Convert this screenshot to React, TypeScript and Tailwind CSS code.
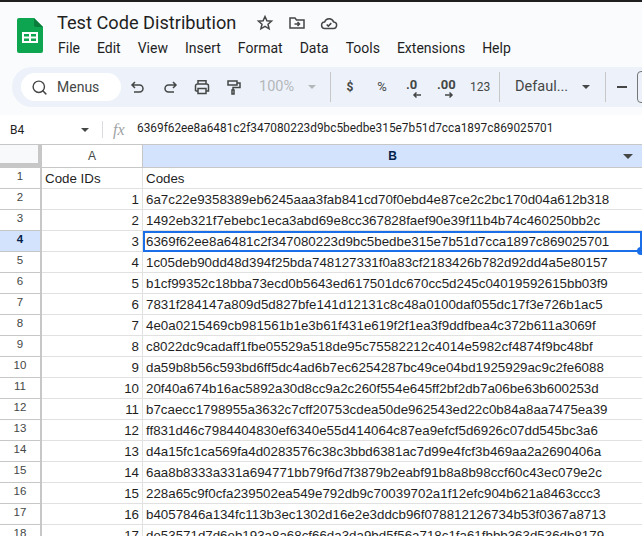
import { Search } from "lucide-react";

const rows = [
  "6a7c22e9358389eb6245aaa3fab841cd70f0ebd4e87ce2c2bc170d04a612b318",
  "1492eb321f7ebebc1eca3abd69e8cc367828faef90e39f11b4b74c460250bb2c",
  "6369f62ee8a6481c2f347080223d9bc5bedbe315e7b51d7cca1897c869025701",
  "1c05deb90dd48d394f25bda748127331f0a83cf2183426b782d92dd4a5e80157",
  "b1cf99352c18bba73ecd0b5643ed617501dc670cc5d245c04019592615bb03f9",
  "7831f284147a809d5d827bfe141d12131c8c48a0100daf055dc17f3e726b1ac5",
  "4e0a0215469cb981561b1e3b61f431e619f2f1ea3f9ddfbea4c372b611a3069f",
  "c8022dc9cadaff1fbe05529a518de95c75582212c4014e5982cf4874f9bc48bf",
  "da59b8b56c593bd6ff5dc4ad6b7ec6254287bc49ce04bd1925929ac9c2fe6088",
  "20f40a674b16ac5892a30d8cc9a2c260f554e645ff2bf2db7a06be63b600253d",
  "b7caecc1798955a3632c7cff20753cdea50de962543ed22c0b84a8aa7475ea39",
  "ff831d46c7984404830ef6340e55d414064c87ea9efcf5d6926c07dd545bc3a6",
  "d4a15fc1ca569fa4d0283576c38c3bbd6381ac7d99e4fcf3b469aa2a2690406a",
  "6aa8b8333a331a694771bb79f6d7f3879b2eabf91b8a8b98ccf60c43ec079e2c",
  "228a65c9f0cfa239502ea549e792db9c70039702a1f12efc904b621a8463ccc3",
  "b4057846a134fc113b3ec1302d16e2e3ddcb96f078812126734b53f0367a8713",
  "de53571d7d6eb193a8a68cf66da3da9bd5f56a718c1fa61fbbb363d536db8179",
];

const menus = ["File", "Edit", "View", "Insert", "Format", "Data", "Tools", "Extensions", "Help"];

function SheetsLogo() {
  return (
    <svg width="26" height="35" viewBox="0 0 26 35" className="shrink-0">
      <path d="M2 0h15l9 9v24a2 2 0 0 1-2 2H2a2 2 0 0 1-2-2V2a2 2 0 0 1 2-2z" fill="#0da54f" />
      <path d="M17 0l9 9h-7a2 2 0 0 1-2-2z" fill="#0a7d3c" />
      <path d="M5 14h16v11H5z" fill="#fff" />
      <path d="M7 16h5v2.500H7zM14 16h5v2.500h-5zM7 20.500h5V23H7zM14 20.500h5V23h-5z" fill="#0da54f" />
    </svg>
  );
}

function Icon({ children, className = "" }: { children: React.ReactNode; className?: string }) {
  return (
    <svg
      width="18"
      height="18"
      viewBox="0 0 18 18"
      fill="none"
      stroke="#444746"
      strokeWidth="1.500"
      className={`shrink-0 ${className}`}
    >
      {children}
    </svg>
  );
}

function Divider() {
  return <div className="mx-[9px] h-[30px] w-px shrink-0 bg-[#c7c7c7]" />;
}

function Header() {
  return (
    <div className="flex h-[65px] items-start pl-[17px]">
      <div className="mt-[16px]">
        <SheetsLogo />
      </div>
      <div className="ml-[14px] flex flex-col">
        <div className="mt-[8px] flex h-[26px] items-center">
          <span className="text-[18.200px] leading-[26px] text-[#1f1f1f]">Test Code Distribution</span>
          <Icon className="ml-[20px]">
            <path d="M9 2.500l1.900 4.300 4.600.4-3.500 3 1.100 4.600L9 12.400l-4.100 2.400L6 10.200l-3.500-3 4.600-.4z" />
          </Icon>
          <Icon className="ml-[14px]">
            <path d="M2 14V4h5l1.500 2H16v8z" />
            <path d="M6.500 10h5M9.500 8l2 2-2 2" />
          </Icon>
          <Icon className="ml-[14px]">
            <path d="M5 14.500a3.200 3.200 0 0 1-.4-6.400 4.800 4.800 0 0 1 9-.2 3.300 3.300 0 0 1-.6 6.600z" />
            <path d="M6.700 10.500l1.600 1.600 3-3" />
          </Icon>
        </div>
        <div className="ml-[1px] mt-[2px] flex h-[20px] items-center gap-[17px] text-[14px] text-[#1f1f1f]">
          {menus.map((m) => (
            <span key={m}>{m}</span>
          ))}
        </div>
      </div>
    </div>
  );
}

function Toolbar() {
  return (
    <div className="ml-[12px] flex h-[40px] w-[700px] items-center rounded-l-[20px] bg-[#edf2fa] pl-[9px] text-[#444746]">
      <div className="flex h-[28px] w-[100px] items-center rounded-full bg-white pl-[10px]">
        <Search size={17} strokeWidth={2} color="#444746" />
        <span className="ml-[9px] text-[14px]">Menus</span>
      </div>
      <Icon className="ml-[8px]">
        <path d="M6 4L3 7l3 3M3 7h7.500a3.500 3.500 0 0 1 0 7H5" />
      </Icon>
      <Icon className="ml-[14px]">
        <path d="M12 4l3 3-3 3M15 7H7.500a3.500 3.500 0 0 0 0 7H13" />
      </Icon>
      <Icon className="ml-[14px]">
        <path d="M5 6V2.800h8V6M2.500 13V8a2 2 0 0 1 2-2h9a2 2 0 0 1 2 2v5h-2.500M5 13H2.500" />
        <path d="M5 10.500h8v5H5z" />
      </Icon>
      <Icon className="ml-[14px]">
        <path d="M3 3h9v4H3zM12 5h3v4.500H8V12" />
        <path d="M7 12h2v4H7z" />
      </Icon>
      <span className="ml-[16px] w-[36px] whitespace-nowrap text-[14.500px] text-[#b4b7ba]">100%</span>
      <svg width="8" height="4" viewBox="0 0 8 4" className="ml-[13px] shrink-0">
        <path d="M0 0h8L4 4z" fill="#b4b7ba" />
      </svg>
      <div className="ml-[5px]">
        <Divider />
      </div>
      <span className="ml-[2px] w-[16px] text-center text-[12px] font-bold">$</span>
      <span className="ml-[16px] w-[16px] text-center text-[13px]">%</span>
      <div className="relative ml-[16px] h-[24px] w-[18px] text-[13px] font-bold leading-[20px]">
        .0
        <svg width="10" height="8" viewBox="0 0 10 8" className="absolute bottom-0 left-[6px]">
          <path d="M9 4H2M4.500 1.500L2 4l2.500 2.500" stroke="#444746" strokeWidth="1.500" fill="none" />
        </svg>
      </div>
      <div className="relative ml-[13px] h-[24px] w-[24px] text-[13px] font-bold leading-[20px]">
        .00
        <svg width="10" height="8" viewBox="0 0 10 8" className="absolute bottom-0 left-[7px]">
          <path d="M1 4h7M5.500 1.500L8 4 5.500 6.500" stroke="#444746" strokeWidth="1.500" fill="none" />
        </svg>
      </div>
      <span className="ml-[9px] w-[20px] text-[12px]">123</span>
      <Divider />
      <span className="ml-[6px] w-[54px] whitespace-nowrap text-[14.500px]">Defaul...</span>
      <svg width="8" height="4" viewBox="0 0 8 4" className="ml-[13px] shrink-0">
        <path d="M0 0h8L4 4z" fill="#444746" />
      </svg>
      <div className="ml-[6px]">
        <Divider />
      </div>
      <div className="ml-[2px] h-[2px] w-[10px] bg-[#444746]" />
      <div className="ml-[10px] h-[32px] w-[24px] rounded-[4px] border border-[#747775]" />
    </div>
  );
}

function FormulaBar() {
  return (
    <div className="mt-[8px] flex h-[29px] items-center bg-white text-[#1f1f1f]">
      <span className="ml-[10px] w-[71px] text-[12px]">B4</span>
      <svg width="8" height="4" viewBox="0 0 8 4" className="shrink-0">
        <path d="M0 0h8L4 4z" fill="#444746" />
      </svg>
      <div className="ml-[13px] h-[17px] w-px bg-[#dadce0]" />
      <span className="ml-[10px] w-[16px] font-['Liberation_Serif',serif] text-[16px] italic text-[#a0a3a6]">fx</span>
      <span className="mb-[1px] ml-[8px] whitespace-nowrap text-[11.850px]">{rows[2]}</span>
    </div>
  );
}

function Grid() {
  return (
    <div className="font-['Liberation_Sans',sans-serif] text-[13.330px] text-[#1f1f1f]">
      <div className="flex h-[24px] border-y border-[#c7c7c7]">
        <div className="h-full w-[42px] shrink-0 border-r-4 border-b-4 border-[#c7c7c7] bg-[#f8f9fa]" />
        <div className="flex w-[101px] shrink-0 items-center justify-center border-r border-[#c7c7c7] bg-white text-[12px] text-[#444746]">
          A
        </div>
        <div className="relative flex flex-1 items-center justify-center bg-[#d3e3fd] text-[12px] font-bold text-[#041e49]">
          <span>B</span>
          <svg width="10" height="5" viewBox="0 0 10 5" className="absolute right-[9px]">
            <path d="M0 0h10L5 5z" fill="#444746" />
          </svg>
        </div>
      </div>
      <Row label="1" a="Code IDs" b="Codes" alignLeft />
      {rows.map((code, i) => (
        <Row key={code} label={String(i + 2)} a={String(i + 1)} b={code} selected={i === 2} />
      ))}
    </div>
  );
}

function Row({
  label,
  a,
  b,
  selected,
  alignLeft,
}: {
  label: string;
  a: string;
  b: string;
  selected?: boolean;
  alignLeft?: boolean;
}) {
  return (
    <div className="flex h-[21px] bg-white">
      <div
        className={`flex w-[42px] shrink-0 items-center justify-center border-r-2 border-b border-[#c7c7c7] pb-[2px] text-[11.500px] ${
          selected ? "bg-[#d3e3fd] font-bold text-[#041e49]" : "bg-white text-[#444746]"
        }`}
      >
        {label}
      </div>
      <div
        className={`flex w-[101px] shrink-0 items-center border-r border-b border-[#e1e1e1] px-[3px] pt-[1px] ${
          alignLeft ? "justify-start" : "justify-end"
        }`}
      >
        {a}
      </div>
      <div
        className={
          selected
            ? "relative flex flex-1 items-center whitespace-nowrap border-2 border-[#1a6fe8] pl-[1px] pt-[1px]"
            : "flex flex-1 items-center whitespace-nowrap border-b border-[#e1e1e1] pl-[3px] pt-[1px]"
        }
      >
        {b}
        {selected && (
          <div className="absolute -bottom-[5px] -right-[5px] h-[8px] w-[8px] rounded-full bg-[#1a6fe8]" />
        )}
      </div>
    </div>
  );
}

export default function App() {
  return (
    <div className="h-[536px] w-[642px] overflow-hidden bg-[#f9fbfd] font-['Roboto',sans-serif]">
      <div className="h-[2px] bg-[#1f1f1f]" />
      <Header />
      <Toolbar />
      <FormulaBar />
      <Grid />
    </div>
  );
}
